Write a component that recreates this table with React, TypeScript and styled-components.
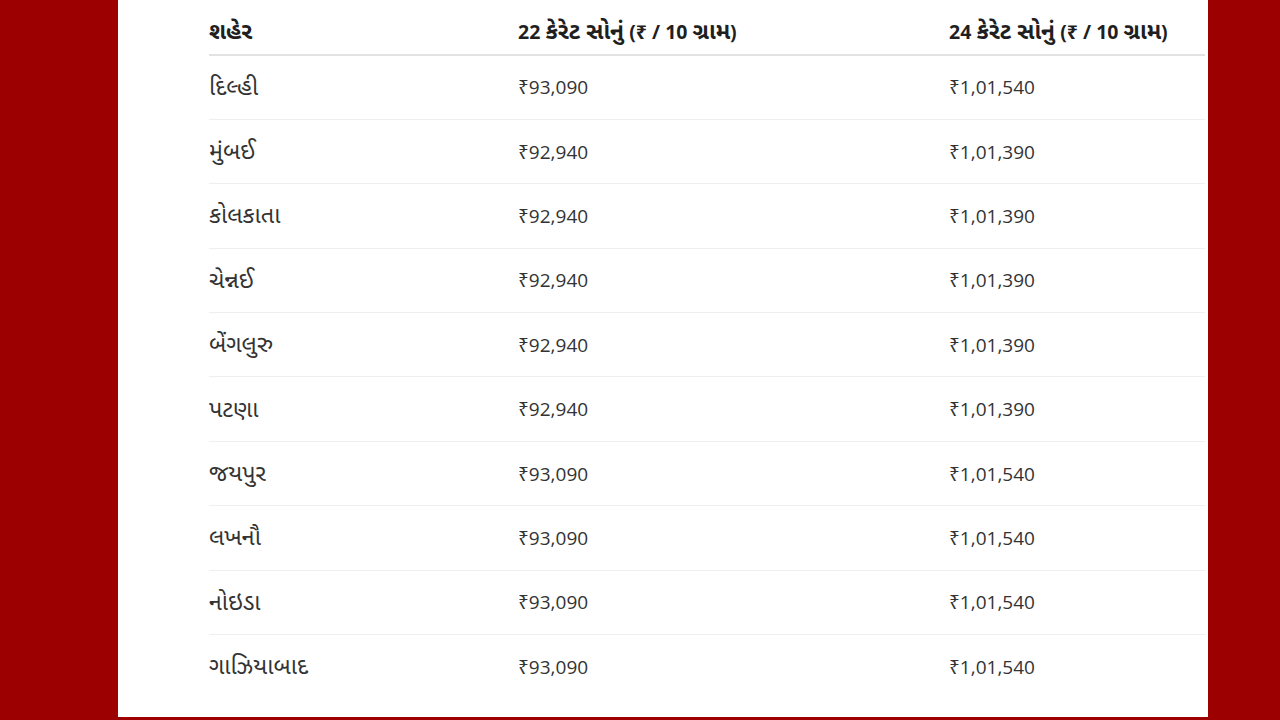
import React from "react";
import styled, { createGlobalStyle } from "styled-components";

const Global = createGlobalStyle`
  html, body { margin: 0; padding: 0; background: #9c0000; }
  body { width: 1280px; height: 720px; overflow: hidden; font-family: "Open Sans", "Noto Sans", "Noto Sans Gujarati", sans-serif; }
`;

const Page = styled.div`
  width: 1280px;
  height: 720px;
  background: #9c0000;
  display: flex;
  justify-content: flex-start;
`;

const Panel = styled.div`
  margin-left: 118px;
  width: 1090px;
  height: 717px;
  background: #ffffff;
  padding-left: 91px;
  box-sizing: border-box;
`;

const Table = styled.table`
  width: 996px;
  border-collapse: collapse;
  table-layout: fixed;
`;

const Th = styled.th<{ $w: number }>`
  width: ${(p) => p.$w}px;
  text-align: left;
  font-weight: 700;
  font-size: 19.5px;
  color: #1f1f1f;
  height: 55px;
  padding: 8px 0 0 0;
  box-sizing: border-box;
  border-bottom: 2px solid #e2e2e2;
  vertical-align: middle;
  white-space: nowrap;
`;

const Td = styled.td`
  font-size: 19px;
  color: #333333;
  height: 64.4px;
  padding: 0;
  box-sizing: border-box;
  border-bottom: 1px solid #efefef;
  vertical-align: middle;
`;

const Guj = styled.span<{ $size?: number }>`
  font-size: ${(p) => p.$size ?? 23.5}px;
`;

const Row = styled.tr<{ $last?: boolean }>`
  ${(p) => (p.$last ? `td { border-bottom: none; }` : "")}
`;

const rows: [string, string, string][] = [
  ["દિલ્હી", "₹93,090", "₹1,01,540"],
  ["મુંબઈ", "₹92,940", "₹1,01,390"],
  ["કોલકાતા", "₹92,940", "₹1,01,390"],
  ["ચેન્નઈ", "₹92,940", "₹1,01,390"],
  ["બેંગલુરુ", "₹92,940", "₹1,01,390"],
  ["પટણા", "₹92,940", "₹1,01,390"],
  ["જયપુર", "₹93,090", "₹1,01,540"],
  ["લખનૌ", "₹93,090", "₹1,01,540"],
  ["નોઇડા", "₹93,090", "₹1,01,540"],
  ["ગાઝિયાબાદ", "₹93,090", "₹1,01,540"],
];

export default function App() {
  return (
    <>
      <Global />
      <Page>
        <Panel>
          <Table>
            <thead>
              <tr>
                <Th $w={309}>
                  <Guj $size={23}>શહેર</Guj>
                </Th>
                <Th $w={431}>
                  22 <Guj $size={23}>કેરેટ સોનું</Guj> (₹ / 10 <Guj $size={23}>ગ્રામ</Guj>)
                </Th>
                <Th $w={256}>
                  24 <Guj $size={23}>કેરેટ સોનું</Guj> (₹ / 10 <Guj $size={23}>ગ્રામ</Guj>)
                </Th>
              </tr>
            </thead>
            <tbody>
              {rows.map((r, i) => (
                <Row key={r[0]} $last={i === rows.length - 1}>
                  <Td>
                    <Guj>{r[0]}</Guj>
                  </Td>
                  <Td>{r[1]}</Td>
                  <Td>{r[2]}</Td>
                </Row>
              ))}
            </tbody>
          </Table>
        </Panel>
      </Page>
    </>
  );
}
